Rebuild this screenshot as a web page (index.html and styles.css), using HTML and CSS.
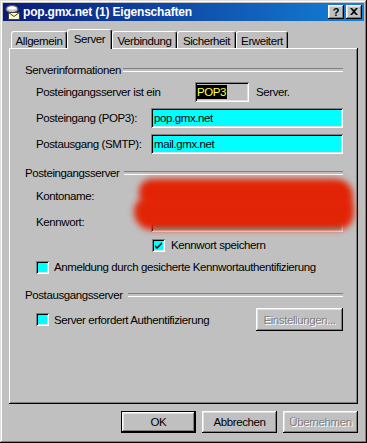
FILE: index.html
```html
<!DOCTYPE html>
<html>
<head>
<meta charset="utf-8">
<link rel="stylesheet" href="styles.css">
</head>
<body>
<div class="window">
  <div class="titlebar">
    <svg class="title-icon" width="16" height="16" viewBox="0 0 16 16">
      <ellipse cx="7" cy="5" rx="6" ry="3.5" fill="#c8c8c8" stroke="#606060" stroke-width="1"/>
      <ellipse cx="7" cy="4" rx="4" ry="1.5" fill="#ffffff"/>
      <rect x="3.5" y="8.5" width="11" height="7" fill="#fff8c0" stroke="#404040" stroke-width="1"/>
      <polyline points="3.5,8.5 9,12.5 14.5,8.5" fill="none" stroke="#404040" stroke-width="1"/>
    </svg>
    <span class="title">pop.gmx.net (1) Eigenschaften</span>
    <div class="ctrls">
      <div class="ctrl">?</div>
      <div class="ctrl">
        <svg width="8" height="7" viewBox="0 0 8 7"><path d="M0 0h2l2 2 2-2h2L5 3.5 8 7H6L4 5 2 7H0l3-3.5z" fill="#000"/></svg>
      </div>
    </div>
  </div>
  <div class="content">
    <div class="tabs">
      <div class="tab w1">Allgemein</div>
      <div class="tab active w2">Server</div>
      <div class="tab w3">Verbindung</div>
      <div class="tab w4">Sicherheit</div>
      <div class="tab w5">Erweitert</div>
    </div>
    <div class="panel">
      <div class="ghead g1">Serverinformationen</div>
      <div class="row r1">
        <span class="label wide">Posteingangsserver ist ein</span>
        <span class="typebox"><span class="sel">POP3</span></span>
        <span class="after">Server.</span>
      </div>
      <div class="row r2">
        <span class="label">Posteingang (POP3):</span>
        <span class="field">pop.gmx.net</span>
      </div>
      <div class="row r2">
        <span class="label">Postausgang (SMTP):</span>
        <span class="field">mail.gmx.net</span>
      </div>
      <div class="ghead g2">Posteingangsserver</div>
      <div class="row r2">
        <span class="label">Kontoname:</span>
        <span class="field plain"></span>
      </div>
      <div class="row r2">
        <span class="label">Kennwort:</span>
        <span class="field plain"></span>
      </div>
      <div class="crow c1">
        <span class="cbox"><svg width="9" height="9" viewBox="0 0 9 9"><path d="M1 4l2 2 5-5v2L3 8 1 6z" fill="#000"/></svg></span>
        <span>Kennwort speichern</span>
      </div>
      <div class="crow c2">
        <span class="cbox"></span>
        <span>Anmeldung durch gesicherte Kennwortauthentifizierung</span>
      </div>
      <div class="ghead g3">Postausgangsserver</div>
      <div class="crow c3">
        <span class="cbox"></span>
        <span>Server erfordert Authentifizierung</span>
        <span class="btn disabled set">Einstellungen...</span>
      </div>
      <div class="redact">
        <div class="blob b1"></div>
        <div class="blob b2"></div>
      </div>
    </div>
    <div class="buttons">
      <span class="btn default">OK</span>
      <span class="btn">Abbrechen</span>
      <span class="btn disabled">Übernehmen</span>
    </div>
  </div>
</div>
</body>
</html>
```
FILE: styles.css
```css
* { box-sizing: border-box; }
html, body { margin: 0; padding: 0; }
body {
  width: 367px;
  height: 443px;
  background: #c0c0c0;
  font-family: "Liberation Sans", Arial, sans-serif;
  font-size: 11.5px;
  letter-spacing: -0.4px;
  color: #000;
  overflow: hidden;
}
.window {
  width: 367px;
  height: 443px;
  padding: 3px;
  background: #c0c0c0;
  box-shadow: inset -1px -1px #000, inset 1px 1px #dfdfdf, inset -2px -2px #808080, inset 2px 2px #fff;
  display: flex;
  flex-direction: column;
}
.titlebar {
  height: 18px;
  background: linear-gradient(to right, #0a1a78, #1480d8);
  display: flex;
  align-items: center;
  padding: 0 2px;
  color: #fff;
}
.title-icon { flex: none; margin-right: 2px; }
.title {
  flex: 1;
  font-weight: bold;
  font-size: 12px;
  letter-spacing: -0.2px;
  white-space: nowrap;
}
.ctrls { display: flex; gap: 2px; }
.ctrl {
  width: 16px;
  height: 14px;
  background: #c0c0c0;
  color: #000;
  box-shadow: inset -1px -1px #000, inset 1px 1px #fff, inset -2px -2px #808080, inset 2px 2px #dfdfdf;
  font-weight: bold;
  font-size: 11px;
  letter-spacing: 0;
  display: flex;
  align-items: center;
  justify-content: center;
  padding-bottom: 1px;
}
.content {
  flex: 1;
  padding: 8px 6px 0 6px;
  display: flex;
  flex-direction: column;
}
.tabs {
  display: flex;
  align-items: flex-end;
  height: 19px;
  padding-left: 2px;
  position: relative;
  z-index: 2;
}
.tab {
  height: 17px;
  border: 1px solid;
  border-color: #fff #000 transparent #fff;
  border-bottom: none;
  border-radius: 3px 3px 0 0;
  box-shadow: inset -1px 0 #808080;
  background: #c0c0c0;
  display: flex;
  align-items: center;
  justify-content: center;
  padding-top: 2px;
  white-space: nowrap;
}
.tab.active {
  height: 20px;
  margin-bottom: -1px;
  padding-top: 0;
  padding-bottom: 1px;
}
.w1 { width: 56px; }
.w2 { width: 45px; }
.w3 { width: 65px; }
.w4 { width: 59px; }
.w5 { width: 52px; }
.panel {
  position: relative;
  z-index: 1;
  height: 356px;
  padding: 0 15px 0 16px;
  box-shadow: inset -1px -1px #000, inset 1px 1px #fff, inset -2px -2px #808080;
  display: flex;
  flex-direction: column;
}
.ghead {
  display: flex;
  align-items: center;
  height: 14px;
  white-space: nowrap;
}
.ghead::after {
  content: "";
  flex: 1;
  height: 2px;
  border-top: 1px solid #808080;
  border-bottom: 1px solid #fff;
  margin-left: 5px;
}
.g1 { margin-top: 15px; }
.g1::after { margin-left: 2px; }
.g2 { margin-top: 12px; }
.g3 { margin-top: 14px; }
.row {
  display: flex;
  align-items: center;
  height: 20px;
  padding-left: 11px;
  white-space: nowrap;
}
.r1 { margin-top: 5px; }
.r2 { margin-top: 6px; }
.label { width: 115px; flex: none; }
.label.wide { width: 159px; }
.typebox {
  width: 54px;
  height: 20px;
  padding: 3px 2px;
  box-shadow: inset 1px 1px #808080, inset -1px -1px #fff, inset 2px 2px #000, inset -2px -2px #dfdfdf;
  display: flex;
  align-items: center;
}
.sel {
  background: #000;
  color: #ffff40;
  height: 14px;
  line-height: 14px;
  padding: 0 1px 0 0;
}
.after { margin-left: 7px; }
.field {
  width: 192px;
  height: 20px;
  background: #00ffff;
  box-shadow: inset 1px 1px #808080, inset -1px -1px #fff, inset 2px 2px #000, inset -2px -2px #dfdfdf;
  padding: 0 3px;
  display: flex;
  align-items: center;
  color: #000;
}
.crow {
  display: flex;
  align-items: center;
  height: 14px;
  white-space: nowrap;
}
.cbox {
  width: 13px;
  height: 13px;
  flex: none;
  background: #00ffff;
  box-shadow: inset 1px 1px #808080, inset -1px -1px #fff, inset 2px 2px #000, inset -2px -2px #dfdfdf;
  display: flex;
  align-items: center;
  justify-content: center;
  margin-right: 6px;
}
.c1 { margin-top: 6px; padding-left: 127px; }
.c2 { margin-top: 8px; padding-left: 11px; }
.c2 .cbox { margin-right: 5px; }
.c3 { margin-top: 6px; padding-left: 11px; height: 23px; }
.c3 .cbox { margin-right: 5px; }
.btn {
  width: 75px;
  height: 22px;
  background: #c0c0c0;
  box-shadow: inset -1px -1px #000, inset 1px 1px #fff, inset -2px -2px #808080, inset 2px 2px #dfdfdf;
  display: flex;
  align-items: center;
  justify-content: center;
  white-space: nowrap;
}
.btn.disabled {
  color: #808080;
  text-shadow: 1px 1px #fff;
}
.btn.default {
  box-shadow: inset 0 0 0 1px #000, inset -2px -2px #000, inset 2px 2px #fff, inset -3px -3px #808080, inset 3px 3px #dfdfdf;
}
.set {
  margin-left: auto;
  width: 87px;
  height: 23px;
}
.buttons {
  margin-top: 7px;
  display: flex;
  justify-content: flex-end;
  gap: 6px;
}
.redact {
  position: absolute;
  left: 124px;
  top: 129px;
  width: 222px;
  height: 56px;
}
.blob {
  position: absolute;
  background: #e22406;
  filter: blur(3px);
}
.b1 { left: 6px; top: 2px; width: 214px; height: 28px; border-radius: 14px 18px 12px 16px; }
.b2 { left: 1px; top: 20px; width: 220px; height: 33px; border-radius: 16px 12px 18px 20px; }
```
